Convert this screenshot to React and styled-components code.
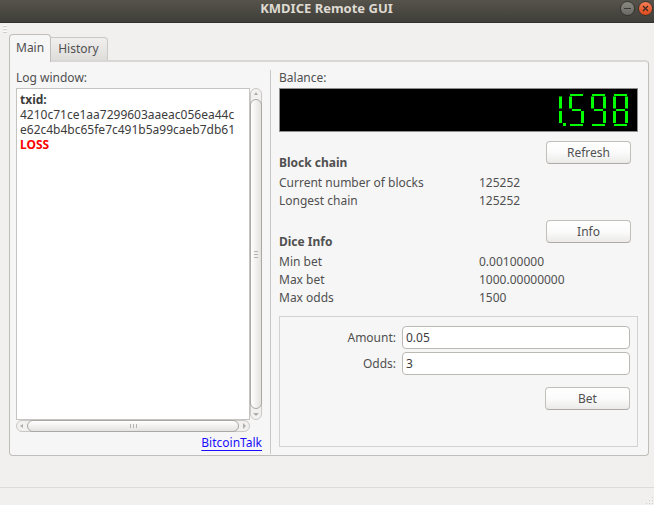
import React, { useState } from "react";
import styled, { createGlobalStyle, css } from "styled-components";

const GlobalStyle = createGlobalStyle`
  *, *::before, *::after { box-sizing: border-box; }
  body {
    margin: 0;
    background: #f1f0ef;
    color: #505050;
    font-family: "Noto Sans", "Open Sans", sans-serif;
    font-size: 12px;
    line-height: 18px;
  }
  button, input { font: inherit; color: inherit; }
`;

const Window = styled.div`
  display: flex;
  flex-direction: column;
  min-height: 100vh;
`;

const TitleBar = styled.header`
  display: grid;
  grid-template-columns: 1fr auto 1fr;
  height: 23px;
  padding-right: 1px;
  background: linear-gradient(#56534b, #3f3e39);
  border-bottom: 1px solid #33322e;
`;

const Title = styled.h1`
  margin: 0;
  font-size: 13px;
  line-height: 16px;
  font-weight: 700;
  color: #dfdbd2;
`;

const WindowControls = styled.div`
  display: flex;
  justify-content: flex-end;
  gap: 3px;
  grid-column: 3;
`;

const WindowButton = styled.button`
  display: grid;
  place-items: center;
  width: 15px;
  height: 15px;
  margin-top: 1px;
  padding: 0;
  border: 1px solid #35342f;
  border-radius: 50%;
  background: ${(p) =>
    p.$close ? "linear-gradient(#f47d55, #dc4a1c)" : "linear-gradient(#8a8881, #6a6963)"};
`;

const Handle = styled.div`
  display: flex;
  flex-direction: column;
  gap: 1px;
  width: 4px;
  height: 11px;
  margin: 2px 0 0 3px;

  span { height: 2px; border-bottom: 1px solid #d2d0ce; background: #fafafa; }
`;

const TabList = styled.div`
  display: flex;
  align-items: flex-end;
  height: 26px;
  margin: -2px 9px 0;
`;

const Tab = styled.button`
  height: 23px;
  padding: 0 8px 0 7px;
  border: 1px solid #cac8c5;
  border-left-width: 0;
  border-bottom: 0;
  border-radius: 0 4px 0 0;
  background: linear-gradient(#f0efee, #dfddda);
  ${(p) =>
    p.$active &&
    css`
      z-index: 1;
      height: 28px;
      margin-bottom: -2px;
      padding: 0 6px 2px;
      border-color: #c0beba;
      border-left-width: 1px;
      border-radius: 4px 4px 0 0;
      background: #f6f6f6;
    `}
`;

const Panel = styled.main`
  display: grid;
  grid-template-columns: 246fr 1px 359fr;
  column-gap: 8px;
  flex: 1;
  margin: 0 5px 0 9px;
  padding: 7px 10px 0 6px;
  border: 1px solid #c0beba;
  border-top: 2px solid #d8d7d6;
  border-radius: 0 4px 4px 4px;
  background: #f6f6f6;
`;

const Divider = styled.div`
  margin: 1px 0;
  background: #c9c8c6;
`;

const Column = styled.section`
  display: flex;
  flex-direction: column;
  min-width: 0;
  padding-bottom: ${(p) => (p.$framed ? "8px" : "3px")};
`;

const Caption = styled.div`
  height: 19px;
`;

const LogGrid = styled.div`
  display: grid;
  grid-template-columns: 1fr 12px;
  grid-template-rows: 1fr 12px;
  flex: 1;
`;

const Log = styled.div`
  min-width: 0;
  overflow: hidden;
  padding: 3px;
  border: 1px solid #c6c4c1;
  background: #fff;
  color: #3c3c3c;
  line-height: 15px;
  white-space: nowrap;
`;

const Loss = styled.strong`
  color: #f00;
`;

const ScrollBar = styled.div`
  display: flex;
  flex-direction: ${(p) => (p.$vertical ? "column" : "row")};
  border: 1px solid #c9c7c4;
  border-radius: 6px;
  background: #f2f1f0;
`;

const Step = styled.button`
  display: grid;
  place-items: center;
  flex: 0 0 10px;
  padding: 0;
  border: 0;
  background: none;
`;

const Thumb = styled.div`
  display: flex;
  flex-direction: ${(p) => (p.$vertical ? "column" : "row")};
  align-items: center;
  justify-content: center;
  gap: 2px;
  flex: 1;
  margin: ${(p) => (p.$vertical ? "0 -1px" : "-1px 0")};
  border: 1px solid #aaa8a4;
  border-radius: 6px;
  background: linear-gradient(${(p) => (p.$vertical ? "to right" : "to bottom")}, #fff, #e5e3e0);

  span {
    width: ${(p) => (p.$vertical ? "4px" : "1px")};
    height: ${(p) => (p.$vertical ? "1px" : "4px")};
    background: #b5b3b0;
  }
`;

const ForumLink = styled.a`
  align-self: flex-end;
  margin-top: 2px;
  color: #1a0dff;
  text-underline-offset: 3px;
`;

const Lcd = styled.output`
  display: flex;
  justify-content: flex-end;
  height: 44px;
  padding: 5px 8px 0 0;
  border: 1px solid #8d8d8d;
  background: #000;
`;

const SectionHead = styled.div`
  display: flex;
  align-items: flex-end;
  justify-content: space-between;
  height: 30px;
  margin-top: ${(p) => (p.$first ? "9px" : "10px")};
  padding-right: 7px;
`;

const Heading = styled.h2`
  margin: 0;
  font-size: 12px;
  line-height: 16px;
  font-weight: 700;
`;

const PushButton = styled.button`
  align-self: ${(p) => (p.$end ? "flex-end" : "flex-start")};
  width: 85px;
  height: 23px;
  margin-top: ${(p) => (p.$end ? "9px" : "0")};
  padding: 0;
  border: 1px solid #c2bfbb;
  border-bottom-color: #aeaba7;
  border-radius: 4px;
  background: linear-gradient(#fff, #fbfbfb 50%, #ebeae9);
  line-height: 20px;
`;

const Facts = styled.dl`
  display: grid;
  grid-template-columns: 200fr 159fr;
  margin: 3px 0 0;

  dt, dd { margin: 0; }
`;

const BetForm = styled.form`
  display: flex;
  flex-direction: column;
  flex: 1;
  gap: 3px;
  margin-top: 9px;
  padding: 9px 7px 8px 0;
  border: 1px solid #d3d2d0;
`;

const Field = styled.div`
  display: grid;
  grid-template-columns: 116px 1fr;
  column-gap: 6px;
  align-items: center;

  label { text-align: right; }
`;

const TextInput = styled.input`
  width: 100%;
  min-width: 0;
  height: 23px;
  padding: 0 3px;
  border: 1px solid #bcb9b5;
  border-radius: 4px;
  background: #fff;
  color: #3c3c3c;
`;

const StatusBar = styled.footer`
  display: flex;
  align-items: flex-end;
  justify-content: flex-end;
  height: 18px;
  margin-top: 31px;
  border-top: 1px solid #dcdbd9;
`;

const SEGMENTS = {
  a: { x1: 1, y1: 1, x2: 14, y2: 1, strokeWidth: 2 },
  b: { x1: 13.5, y1: 2.5, x2: 13.5, y2: 14.5, strokeWidth: 3 },
  c: { x1: 13.5, y1: 17, x2: 13.5, y2: 29, strokeWidth: 3 },
  d: { x1: 1, y1: 31, x2: 14, y2: 31, strokeWidth: 2 },
  e: { x1: 1.5, y1: 17, x2: 1.5, y2: 29, strokeWidth: 3 },
  f: { x1: 1.5, y1: 2.5, x2: 1.5, y2: 14.5, strokeWidth: 3 },
  g: { x1: 3, y1: 16, x2: 12, y2: 16, strokeWidth: 2 },
};

const LIT = { 1: "bc", 5: "afgcd", 8: "abcdefg", 9: "abcdfg" };

function LcdNumber({ value }) {
  const cells = [];
  let column = 0;
  for (const char of value) {
    if (char === ".") {
      cells.push(<rect key="point" x={column * 22 - 6} y="29" width="3" height="3" fill="#0f0" stroke="none" />);
    } else {
      cells.push(
        <g key={column} transform={`translate(${column * 22} 0)`}>
          {[...LIT[char]].map((name) => <line key={name} {...SEGMENTS[name]} />)}
        </g>
      );
      column += 1;
    }
  }
  return (
    <svg width="82" height="33" viewBox="0 0 82 33" stroke="#0f0" role="img" aria-label={value}>
      {cells}
    </svg>
  );
}

function Arrow({ points }) {
  return (
    <svg width="6" height="6" viewBox="0 0 6 6" aria-hidden="true">
      <polygon points={points} fill="#b0aeab" />
    </svg>
  );
}

function Scroll({ vertical, back, forward, names }) {
  return (
    <ScrollBar $vertical={vertical}>
      <Step type="button" aria-label={names[0]}><Arrow points={back} /></Step>
      <Thumb $vertical={vertical}><span /><span /><span /></Thumb>
      <Step type="button" aria-label={names[1]}><Arrow points={forward} /></Step>
    </ScrollBar>
  );
}

function FactList({ rows }) {
  return (
    <Facts>
      {rows.map(([name, value]) => (
        <React.Fragment key={name}>
          <dt>{name}</dt>
          <dd>{value}</dd>
        </React.Fragment>
      ))}
    </Facts>
  );
}

export default function App() {
  const [amount, setAmount] = useState("0.05");
  const [odds, setOdds] = useState("3");

  return (
    <Window>
      <GlobalStyle />
      <TitleBar>
        <span />
        <Title>KMDICE Remote GUI</Title>
        <WindowControls>
          <WindowButton type="button" aria-label="Minimize">
            <svg width="9" height="9" viewBox="0 0 9 9"><path d="M1 4.5H8" stroke="#3c3b37" /></svg>
          </WindowButton>
          <WindowButton type="button" aria-label="Close" $close>
            <svg width="9" height="9" viewBox="0 0 9 9"><path d="M2 2L7 7M7 2L2 7" stroke="#3c2a20" strokeWidth="1.2" /></svg>
          </WindowButton>
        </WindowControls>
      </TitleBar>
      <Handle><span /><span /><span /></Handle>
      <TabList role="tablist">
        <Tab type="button" role="tab" aria-selected="true" $active>Main</Tab>
        <Tab type="button" role="tab" aria-selected="false">History</Tab>
      </TabList>
      <Panel>
        <Column>
          <Caption>Log window:</Caption>
          <LogGrid>
            <Log role="log">
              <strong>txid:</strong>
              <div>4210c71ce1aa7299603aaeac056ea44c</div>
              <div>e62c4b4bc65fe7c491b5a99caeb7db61</div>
              <Loss>LOSS</Loss>
            </Log>
            <Scroll vertical back="3,1 5,4 1,4" forward="0,2 6,2 3,5" names={["Scroll up", "Scroll down"]} />
            <Scroll back="4,1 4,5 1,3" forward="2,0 2,6 5,3" names={["Scroll left", "Scroll right"]} />
          </LogGrid>
          <ForumLink href="#bitcointalk">BitcoinTalk</ForumLink>
        </Column>
        <Divider />
        <Column $framed>
          <Caption>Balance:</Caption>
          <Lcd><LcdNumber value="1.598" /></Lcd>
          <SectionHead $first>
            <Heading>Block chain</Heading>
            <PushButton type="button">Refresh</PushButton>
          </SectionHead>
          <FactList rows={[["Current number of blocks", "125252"], ["Longest chain", "125252"]]} />
          <SectionHead>
            <Heading>Dice Info</Heading>
            <PushButton type="button">Info</PushButton>
          </SectionHead>
          <FactList rows={[["Min bet", "0.00100000"], ["Max bet", "1000.00000000"], ["Max odds", "1500"]]} />
          <BetForm onSubmit={(event) => event.preventDefault()}>
            <Field>
              <label htmlFor="amount">Amount:</label>
              <TextInput id="amount" value={amount} onChange={(e) => setAmount(e.target.value)} />
            </Field>
            <Field>
              <label htmlFor="odds">Odds:</label>
              <TextInput id="odds" value={odds} onChange={(e) => setOdds(e.target.value)} />
            </Field>
            <PushButton $end>Bet</PushButton>
          </BetForm>
        </Column>
      </Panel>
      <StatusBar>
        <svg width="8" height="8" viewBox="0 0 8 8" fill="#cfcdca" aria-hidden="true">
          <path d="M6 0h1v1h-1zM6 3h1v1h-1zM3 3h1v1h-1zM6 6h1v1h-1zM3 6h1v1h-1zM0 6h1v1h-1z" />
        </svg>
      </StatusBar>
    </Window>
  );
}
